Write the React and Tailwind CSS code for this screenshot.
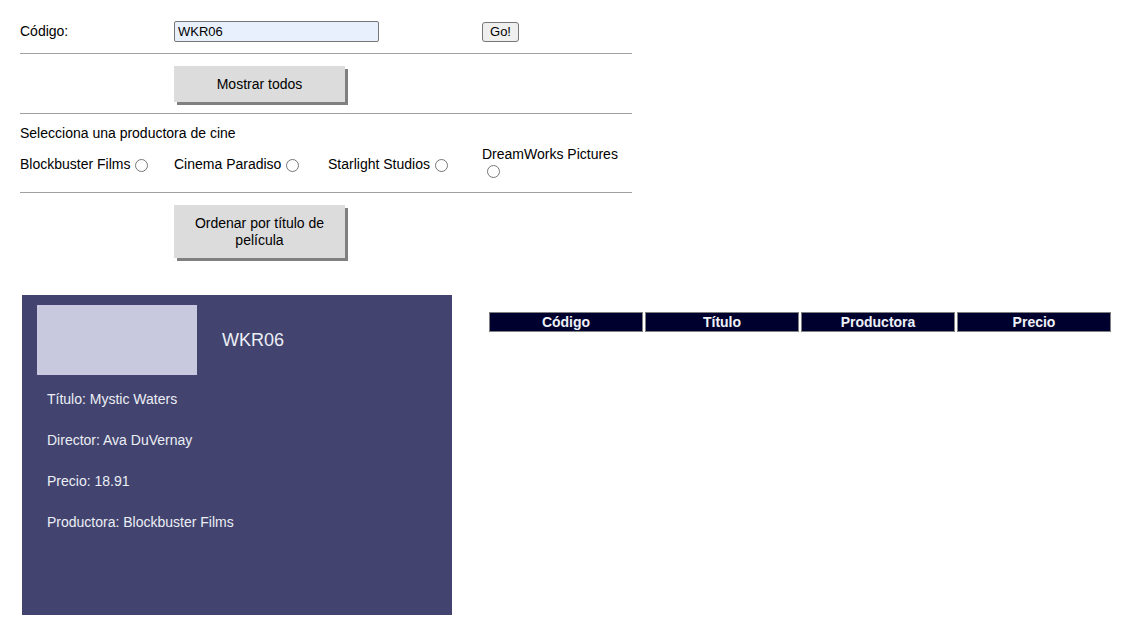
import React, { useState } from "react";

const productoras = ["Blockbuster Films", "Cinema Paradiso", "Starlight Studios", "DreamWorks Pictures"];

const pelicula = {
  codigo: "WKR06",
  titulo: "Mystic Waters",
  director: "Ava DuVernay",
  precio: "18.91",
  productora: "Blockbuster Films",
};

export default function App() {
  const [codigo, setCodigo] = useState("WKR06");
  const [prod, setProd] = useState("");

  return (
    <div className="min-h-[632px] bg-white text-[14px] text-black" style={{ fontFamily: '"Liberation Sans", Arial, sans-serif' }}>
      <div className="w-[632px] pl-5 pt-[21px]">
        <div className="flex h-[21px] items-center">
          <label className="w-[154px]">Código:</label>
          <input
            value={codigo}
            onChange={(e) => setCodigo(e.target.value)}
            className="h-[21px] w-[205px] rounded-[2px] border border-[#767676] bg-[#e8f0fe] px-[3px] text-[13px] outline-none"
          />
          <button className="ml-[103px] h-[20px] w-[37px] rounded-[3px] border border-[#767676] bg-[#efefef] text-[13px] leading-none">Go!</button>
        </div>

        <div className="mt-[11px] border-t border-[#a0a0a0]" />

        <button className="ml-[154px] mt-3 block h-[36px] w-[171px] bg-[#dcdcdc] shadow-[3px_3px_0_#808080]">Mostrar todos</button>

        <div className="mt-[11px] border-t border-[#a0a0a0]" />

        <div className="mt-[11px] leading-4">Selecciona una productora de cine</div>
        <div className="mt-[5px] grid grid-cols-[154px_154px_154px_154px] items-center leading-4">
          {productoras.map((p, i) => (
            <label key={p} className={`flex flex-wrap items-center ${i < 3 ? "mt-1" : ""}`}>
              <span>{p}</span>
              <input
                type="radio"
                name="prod"
                checked={prod === p}
                onChange={() => setProd(p)}
                className="ml-[5px] mr-[3px] mt-[3px] h-[13px] w-[13px]"
              />
            </label>
          ))}
        </div>

        <div className="mt-[14px] border-t border-[#a0a0a0]" />

        <button className="ml-[154px] mt-3 block h-[53px] w-[171px] bg-[#dcdcdc] px-4 leading-[17px] shadow-[3px_3px_0_#808080]">
          Ordenar por título de película
        </button>
      </div>

      <div className="mt-[37px] flex items-start">
        <div className="ml-[22px] h-[320px] w-[430px] bg-[#42446f] text-[#eceef5]">
          <div className="flex items-center pl-[15px] pt-[10px]">
            <div className="h-[70px] w-[160px] bg-[#c8c9de]" />
            <div className="ml-[25px] text-[18px]">{pelicula.codigo}</div>
          </div>
          <div className="mt-[16px] flex flex-col gap-[25px] pl-[25px] leading-4">
            <p>Título: {pelicula.titulo}</p>
            <p>Director: {pelicula.director}</p>
            <p>Precio: {pelicula.precio}</p>
            <p>Productora: {pelicula.productora}</p>
          </div>
        </div>

        <table className="ml-[35px] mt-[15px] w-[626px] border-separate border-spacing-[2px]">
          <thead>
            <tr>
              {["Código", "Título", "Productora", "Precio"].map((h) => (
                <th key={h} className="h-[20px] w-[154px] border border-[#808080] bg-[#00002e] p-0 text-center font-bold leading-4 text-[#eef0f8]">
                  {h}
                </th>
              ))}
            </tr>
          </thead>
          <tbody />
        </table>
      </div>
    </div>
  );
}
